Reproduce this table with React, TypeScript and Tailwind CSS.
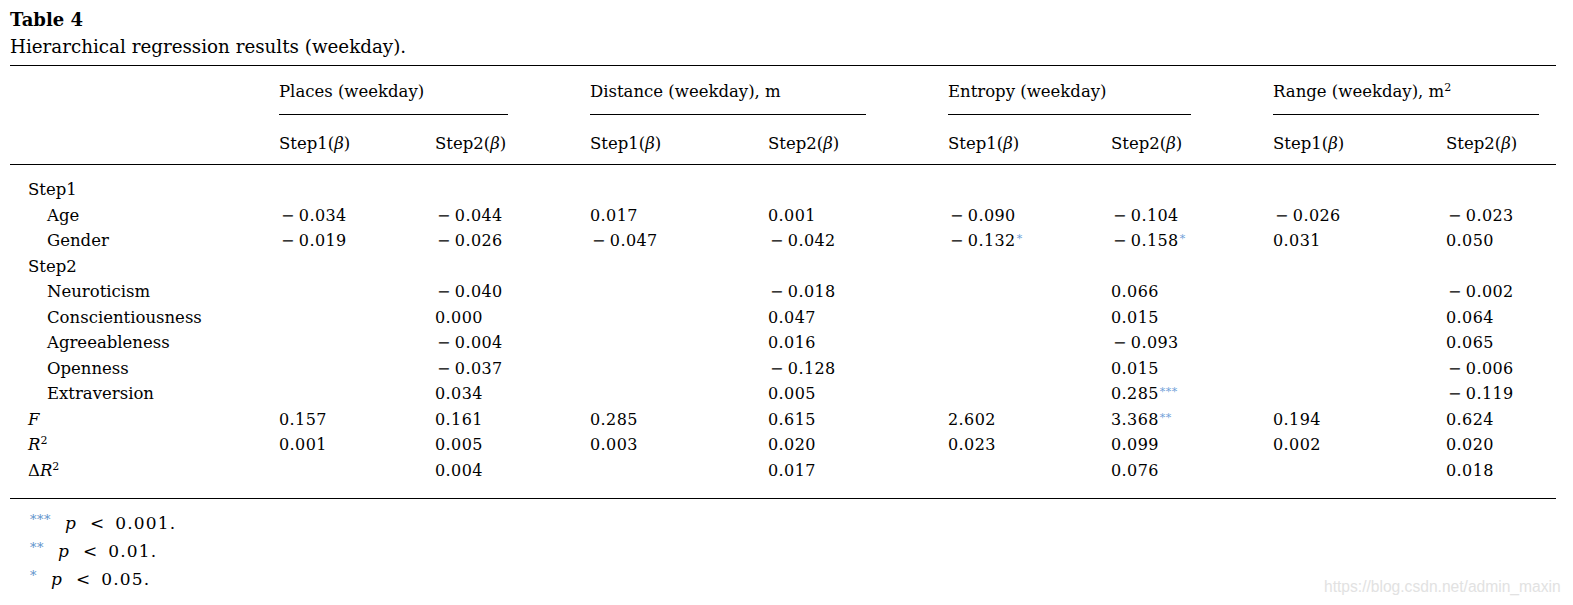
import React from 'react';

const cols = 'grid grid-cols-[269px_156px_155px_178px_180px_163px_162px_173px_110px]';

type Cell = string | null;

const groups = [
  { title: <>Places (weekday)</>, mr: 'mr-[82px]' },
  { title: <>Distance (weekday), m</>, mr: 'mr-[82px]' },
  { title: <>Entropy (weekday)</>, mr: 'mr-[82px]' },
  {
    title: (
      <>
        Range (weekday), m<span className="relative -top-[6px] text-[11px] leading-none">2</span>
      </>
    ),
    mr: 'mr-[17px]',
  },
];

const sq = <span className="relative -top-[6px] text-[11px] leading-none">2</span>;

const rows: { label: React.ReactNode; indent?: boolean; cells?: Cell[] }[] = [
  { label: 'Step1' },
  { label: 'Age', indent: true, cells: ['-0.034', '-0.044', '0.017', '0.001', '-0.090', '-0.104', '-0.026', '-0.023'] },
  { label: 'Gender', indent: true, cells: ['-0.019', '-0.026', '-0.047', '-0.042', '-0.132*', '-0.158*', '0.031', '0.050'] },
  { label: 'Step2' },
  { label: 'Neuroticism', indent: true, cells: [null, '-0.040', null, '-0.018', null, '0.066', null, '-0.002'] },
  { label: 'Conscientiousness', indent: true, cells: [null, '0.000', null, '0.047', null, '0.015', null, '0.064'] },
  { label: 'Agreeableness', indent: true, cells: [null, '-0.004', null, '0.016', null, '-0.093', null, '0.065'] },
  { label: 'Openness', indent: true, cells: [null, '-0.037', null, '-0.128', null, '0.015', null, '-0.006'] },
  { label: 'Extraversion', indent: true, cells: [null, '0.034', null, '0.005', null, '0.285***', null, '-0.119'] },
  { label: <i>F</i>, cells: ['0.157', '0.161', '0.285', '0.615', '2.602', '3.368**', '0.194', '0.624'] },
  {
    label: (
      <>
        <i>R</i>
        {sq}
      </>
    ),
    cells: ['0.001', '0.005', '0.003', '0.020', '0.023', '0.099', '0.002', '0.020'],
  },
  {
    label: (
      <>
        Δ<i>R</i>
        {sq}
      </>
    ),
    cells: [null, '0.004', null, '0.017', null, '0.076', null, '0.018'],
  },
];

function Num({ v }: { v: Cell }) {
  if (!v) return <div />;
  const stars = v.match(/\*+$/)?.[0] ?? '';
  let body = stars ? v.slice(0, -stars.length) : v;
  const neg = body.startsWith('-');
  if (neg) body = body.slice(1);
  return (
    <div className="whitespace-nowrap text-[16px] tracking-[0.4px]">
      {neg && <span className="ml-[2px] mr-[4px]">−</span>}
      {body}
      {stars && (
        <span className="relative -top-[4px] ml-[1px] text-[11px] leading-none tracking-[0.5px] text-[#6f9fd8]">
          {stars}
        </span>
      )}
    </div>
  );
}

function Footnote({ stars, value }: { stars: string; value: string }) {
  return (
    <div className="flex items-baseline whitespace-nowrap">
      <span className="relative -top-[5px] mr-[14px] text-[13px] leading-none tracking-[0.5px] text-[#5f93cc]">{stars}</span>
      <i>p</i>
      <span className="ml-[14px]">&lt;</span>
      <span className="ml-[11px] tracking-[1.2px]">{value}</span>
    </div>
  );
}

export default function App() {
  return (
    <div className="relative h-[605px] w-[1573px] overflow-hidden bg-white font-['DejaVu_Serif',serif] text-black">
      <div className="pl-[10px]">
        <div className="w-[1546px]">
          {/* Caption */}
          <div className="pt-[6px] leading-[27px]">
            <div className="text-[18px] font-bold">Table 4</div>
            <div className="text-[18.3px]">Hierarchical regression results (weekday).</div>
          </div>

          {/* Head */}
          <div className="mt-[5px] border-y border-black pt-[13px] pb-[8px] text-[16.5px]">
            <div className={cols}>
              <div />
              {groups.map((g, i) => (
                <div key={i} className={`col-span-2 border-b border-black pb-[10px] leading-[25px] ${g.mr}`}>
                  {g.title}
                </div>
              ))}
            </div>
            <div className={`${cols} mt-[16px] leading-[25px]`}>
              <div />
              {Array.from({ length: 8 }).map((_, i) => (
                <div key={i}>
                  Step{i % 2 === 0 ? 1 : 2}(<i>β</i>)
                </div>
              ))}
            </div>
          </div>

          {/* Body */}
          <div className="border-b border-black pt-[12px] pb-[15px] text-[16.5px] leading-[25.5px]">
            {rows.map((r, i) => (
              <div key={i} className={`${cols} h-[25.5px]`}>
                <div className={r.indent ? 'pl-[37px]' : 'pl-[18px]'}>{r.label}</div>
                {r.cells?.map((c, j) => <Num key={j} v={c} />)}
              </div>
            ))}
          </div>

          {/* Notes */}
          <div className="pt-[10px] pl-[20px] text-[17px] leading-[28px]">
            <Footnote stars="***" value="0.001." />
            <Footnote stars="**" value="0.01." />
            <Footnote stars="*" value="0.05." />
          </div>
        </div>
      </div>

      <div className="absolute top-[579px] left-[1324px] whitespace-nowrap font-['Liberation_Sans',sans-serif] text-[15.6px] leading-[16px] text-[#e2e2e2]">
        https://blog.csdn.net/admin_maxin
      </div>
    </div>
  );
}
